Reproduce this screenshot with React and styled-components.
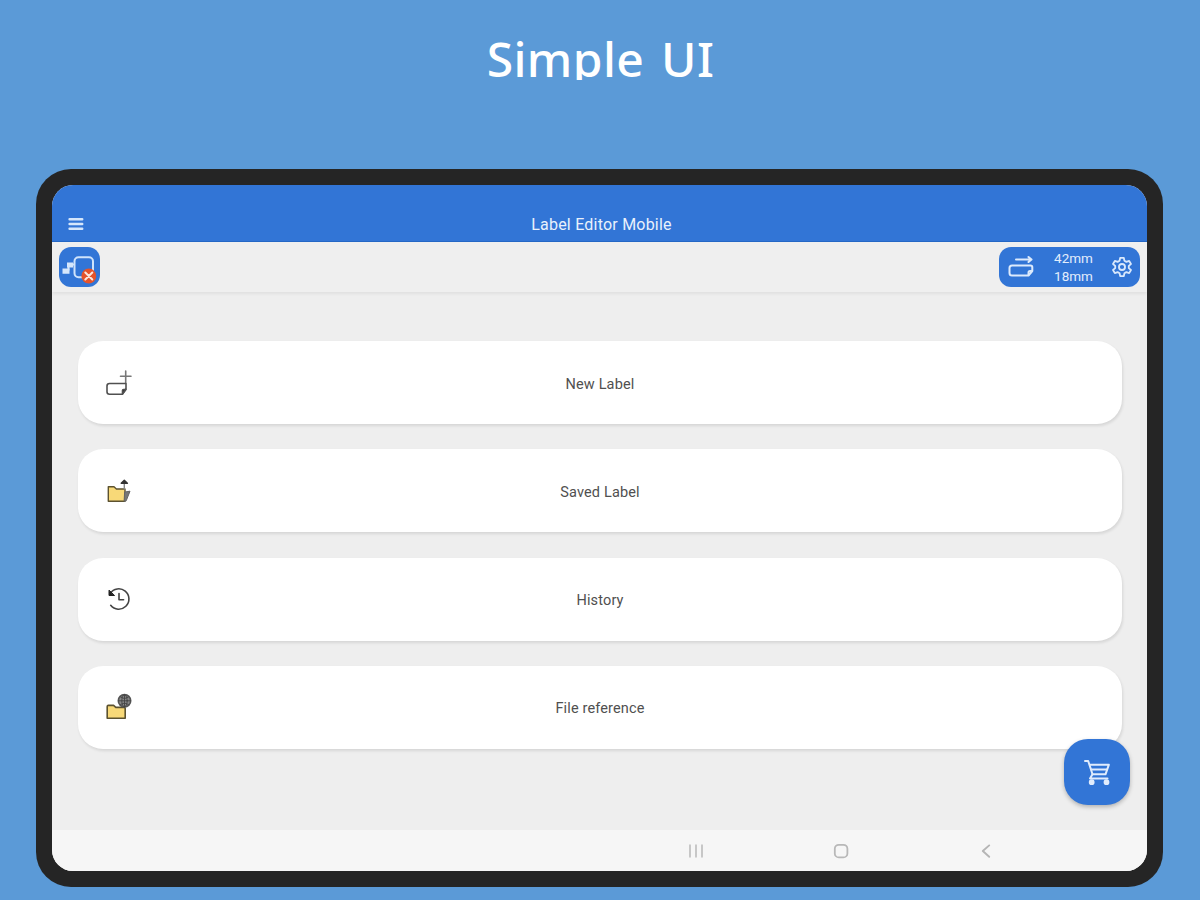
import React from "react";
import styled, {createGlobalStyle} from "styled-components";


const GlobalStyle = createGlobalStyle`
  * {
    box-sizing: border-box;
  }

  body {
    margin: 0;
    background: #5b9ad7;
    font-family: Roboto, "Liberation Sans", sans-serif;
  }
`;

const Page = styled.div`
  display: flex;
  flex-direction: column;
  align-items: center;
  width: 1200px;
  height: 900px;
  overflow: hidden;
  background: #5b9ad7;
`;

// the headline box ends just under the baseline, so descenders are cut
const Headline = styled.h1`
  flex: none;
  height: 80px;
  margin: 0 0 89px;
  padding: 24px 0 0 1px;
  overflow: hidden;
  color: #fff;
  font: 500 48px/70px "Noto Sans", sans-serif;
  letter-spacing: 0.4px;
  word-spacing: 4px;
  white-space: nowrap;
`;

const Tablet = styled.div`
  flex: none;
  width: 1127px;
  height: 718px;
  margin-right: 1px;
  padding: 16px;
  border-radius: 35px;
  background: #252525;
`;

const Screen = styled.div`
  position: relative;
  display: flex;
  flex-direction: column;
  width: 1095px;
  height: 686px;
  overflow: hidden;
  border-radius: 21px;
  background: #eee;
`;

const AppBar = styled.header`
  display: grid;
  grid-template-columns: 48px 1fr 44px;
  align-items: center;
  flex: none;
  height: 57px;
  padding-top: 21px;
  background: #3275d6;
  border-bottom: 1px solid #2467c5;
  color: #e9f1fc;
`;

const MenuButton = styled.div`
  display: flex;
  padding-left: 16px;
`;

const AppTitle = styled.div`
  padding-top: 2px;
  text-align: center;
  font-size: 16px;
  letter-spacing: 0.22px;
  line-height: 20px;
`;

const Toolbar = styled.div`
  display: flex;
  flex: none;
  justify-content: space-between;
  height: 50px;
  padding: 5px 7px 0;
  background: #efefef;
  box-shadow: 0 2px 3px rgba(0, 0, 0, 0.06);
`;

const Chip = styled.div`
  display: flex;
  align-items: center;
  justify-content: ${({$spread}) => ($spread ? "space-between" : "center")};
  width: ${({$width}) => $width}px;
  height: 40px;
  padding: ${({$spread}) => ($spread ? "0 7px 0 8px" : "0")};
  border-radius: 12px;
  background: #3275d6;
`;

const Dimensions = styled.div`
  padding-left: 1px;
  color: #e3edfc;
  font-size: 13.5px;
  line-height: 18px;
  text-align: right;
`;

const Menu = styled.main`
  display: flex;
  flex: 1;
  flex-direction: column;
  gap: 25.3px;
  padding: 49px 25px 0 26px;
`;

const MenuCard = styled.div`
  display: grid;
  grid-template-columns: 82px 1fr 82px;
  align-items: center;
  flex: none;
  height: 83px;
  border-radius: 25px;
  background: #fff;
  box-shadow: 1px 2px 3px rgba(0, 0, 0, 0.1);
`;

const CardIcon = styled.div`
  display: flex;
  justify-content: center;
`;

const CardLabel = styled.div`
  color: #505050;
  font-size: 14.5px;
  letter-spacing: 0.15px;
  line-height: 20px;
  padding-top: 4px;
  text-align: center;
`;

const CartButton = styled.div`
  position: absolute;
  right: 17px;
  bottom: 66px;
  display: flex;
  align-items: center;
  justify-content: center;
  width: 66px;
  height: 66px;
  border-radius: 24px;
  background: #3275d6;
  box-shadow: 0 2px 4px rgba(0, 0, 0, 0.25);
`;

const NavBar = styled.nav`
  display: grid;
  grid-template-columns: repeat(3, 145px);
  align-items: center;
  justify-items: center;
  flex: none;
  height: 41px;
  padding: 1px 0 0 571px;
  background: #f6f6f6;
`;

const Icon = styled.svg`
  display: block;
  flex: none;
  fill: none;
  stroke: ${({$color}) => $color || "#444"};
  stroke-width: ${({$weight}) => $weight || 1.4};
  stroke-linecap: round;
  stroke-linejoin: round;
`;

const HamburgerIcon = () => (
    <Icon width="16" height="14" $color="#d5e6fb" $weight={2.5}>
        <path d="M1.6 2.3H14.2M1.6 7H14.2M1.6 11.7H14.2"/>
    </Icon>
);

const PrinterOffIcon = () => (
    <Icon width="42" height="40" $color="#cfe3fb" $weight={2}>
        <rect x="15.5" y="10.3" width="18.5" height="20" rx="4"/>
        <path d="M15 17.5H9.5V23" strokeWidth="2"/>
        <path d="M8 15.5H14V20.5H8ZM3.5 21.5H10.5V26.8H3.5Z" fill="#d5e6fb" stroke="none"/>
        <circle cx="29.8" cy="29" r="7.4" fill="#e5532b" stroke="none"/>
        <path d="M26.3 25.5L33.3 32.5M33.3 25.5L26.3 32.5" stroke="#fbe6de" strokeWidth="2"/>
    </Icon>
);

const TapeIcon = () => (
    <Icon width="28" height="24" $color="#dceafc" $weight={2}>
        <path d="M9 4.5H23M21.5 2L24.5 4.5L21.5 7"/>
        <path d="M5 10.5H23.5Q25.3 10.5 25.3 12.3V16L21.5 20.5H5Q2.5 20.5 2.5 18V13Q2.5 10.5 5 10.5Z"/>
        <path d="M21.5 20V17.5Q21.5 16 23 16H25"/>
    </Icon>
);

const GearIcon = () => (
    <Icon width="22" height="22" viewBox="0 0 24 24" $color="#d9e8fc" $weight={2}>
        <path
            d="M10 2H14L14.6 5.1L16.8 6.4L19.8 5.3L21.8 8.8L19.4 10.8V13.2L21.8 15.2L19.8 18.7L16.8 17.6L14.6 18.9L14 22H10L9.4 18.9L7.2 17.6L4.2 18.7L2.2 15.2L4.6 13.2V10.8L2.2 8.8L4.2 5.3L7.2 6.4L9.4 5.1Z"/>
        <circle cx="12" cy="12" r="3.3"/>
    </Icon>
);

const NewLabelIcon = () => (
    <Icon width="28" height="28" $color="#505050" $weight={1.6}>
        <path d="M20.7 2V14M15.5 7.2H26" stroke="#777"/>
        <path d="M4.5 14.5H21V19.5L17.5 25.2H4.5Q2 25.2 2 22.7V17Q2 14.5 4.5 14.5Z"/>
        <path d="M21 20.5H18.5Q17.5 20.5 17.5 21.5V25Z" fill="#222"/>
    </Icon>
);

const SavedLabelIcon = () => (
    <Icon width="28" height="28" $color="#5c522f">
        <path d="M3.3 9.8H9L11.4 12H20V24.2H3.3Z" fill="#f8d978"/>
        <path d="M20 15L25 14.2L21.2 23.8L19.5 24.2Z" fill="#777" stroke="#666" strokeWidth="1"/>
        <path d="M19.3 12V5" stroke="#888"/>
        <path d="M16.2 6.2L19.3 3.2L22.4 6.2Z" fill="#333" stroke="#333"/>
    </Icon>
);

const HistoryIcon = () => (
    <Icon width="28" height="28" $weight={1.6}>
        <path d="M5.2 8.4A10.2 10.2 0 1 1 5.7 20.3"/>
        <path d="M4 5.5V10.5H9.2Z" fill="#222" stroke="#222" strokeWidth="1"/>
        <path d="M14 8.6V14.8H18.6"/>
    </Icon>
);

const FileReferenceIcon = () => (
    <Icon width="28" height="28" $color="#5c522f" $weight={1.6}>
        <path d="M2.2 13.6Q2.2 12.4 3.4 12.4H8.6L10.8 14.4H19Q20.2 14.4 20.2 15.6V25.2H2.2Z" fill="#f8d978"/>
        <circle cx="19.5" cy="7.8" r="6.2" fill="#888" stroke="#555"/>
        <path d="M13.5 7.8H25.5M19.5 1.8V13.8M15.6 4Q19.5 7 23.4 4M15.6 11.6Q19.5 8.6 23.4 11.6" stroke="#444"
              strokeWidth="0.9"/>
        <ellipse cx="19.5" cy="7.8" rx="2.7" ry="6" stroke="#444" strokeWidth="0.9"/>
    </Icon>
);

const CartIcon = () => (
    <Icon width="28" height="28" $color="#e0ecfd" $weight={2}>
        <path d="M2 3H5.2L9.5 16.3H22.5L25.8 6.8H6.6"/>
        <path d="M9.5 16.3L7 20.5H24.5M8.3 11.6H24"/>
        <circle cx="8.7" cy="24.2" r="1.9" fill="#e0ecfd"/>
        <circle cx="23.5" cy="24.2" r="1.9" fill="#e0ecfd"/>
    </Icon>
);

const RecentsIcon = () => (
    <Icon width="16" height="16" $color="#bfbfbf" $weight={1.7}>
        <path d="M2 2.2V13.8M8 2.2V13.8M14 2.2V13.8"/>
    </Icon>
);

const HomeIcon = () => (
    <Icon width="16" height="16" $color="#b8b8b8" $weight={1.8}>
        <rect x="1.8" y="1.8" width="12.6" height="12.6" rx="4"/>
    </Icon>
);

const BackIcon = () => (
    <Icon width="16" height="16" $color="#b5b5b5" $weight={1.9}>
        <path d="M11.2 2.4L4.8 8L11.2 13.8"/>
    </Icon>
);

const items = [
    {text: "New Label", Pic: NewLabelIcon},
    {text: "Saved Label", Pic: SavedLabelIcon},
    {text: "History", Pic: HistoryIcon},
    {text: "File reference", Pic: FileReferenceIcon},
];

const App = () => (
    <Page>
        <GlobalStyle/>
        <Headline>Simple UI</Headline>
        <Tablet>
            <Screen>
                <AppBar>
                    <MenuButton><HamburgerIcon/></MenuButton>
                    <AppTitle>Label Editor Mobile</AppTitle>
                </AppBar>
                <Toolbar>
                    <Chip $width={41}><PrinterOffIcon/></Chip>
                    <Chip $width={141} $spread>
                        <TapeIcon/>
                        <Dimensions>
                            <div>42mm</div>
                            <div>18mm</div>
                        </Dimensions>
                        <GearIcon/>
                    </Chip>
                </Toolbar>
                <Menu>
                    {items.map(({text, Pic}) => (
                        <MenuCard key={text}>
                            <CardIcon><Pic/></CardIcon>
                            <CardLabel>{text}</CardLabel>
                        </MenuCard>
                    ))}
                </Menu>
                <NavBar>
                    <RecentsIcon/>
                    <HomeIcon/>
                    <BackIcon/>
                </NavBar>
                <CartButton><CartIcon/></CartButton>
            </Screen>
        </Tablet>
    </Page>
);

export default App;
